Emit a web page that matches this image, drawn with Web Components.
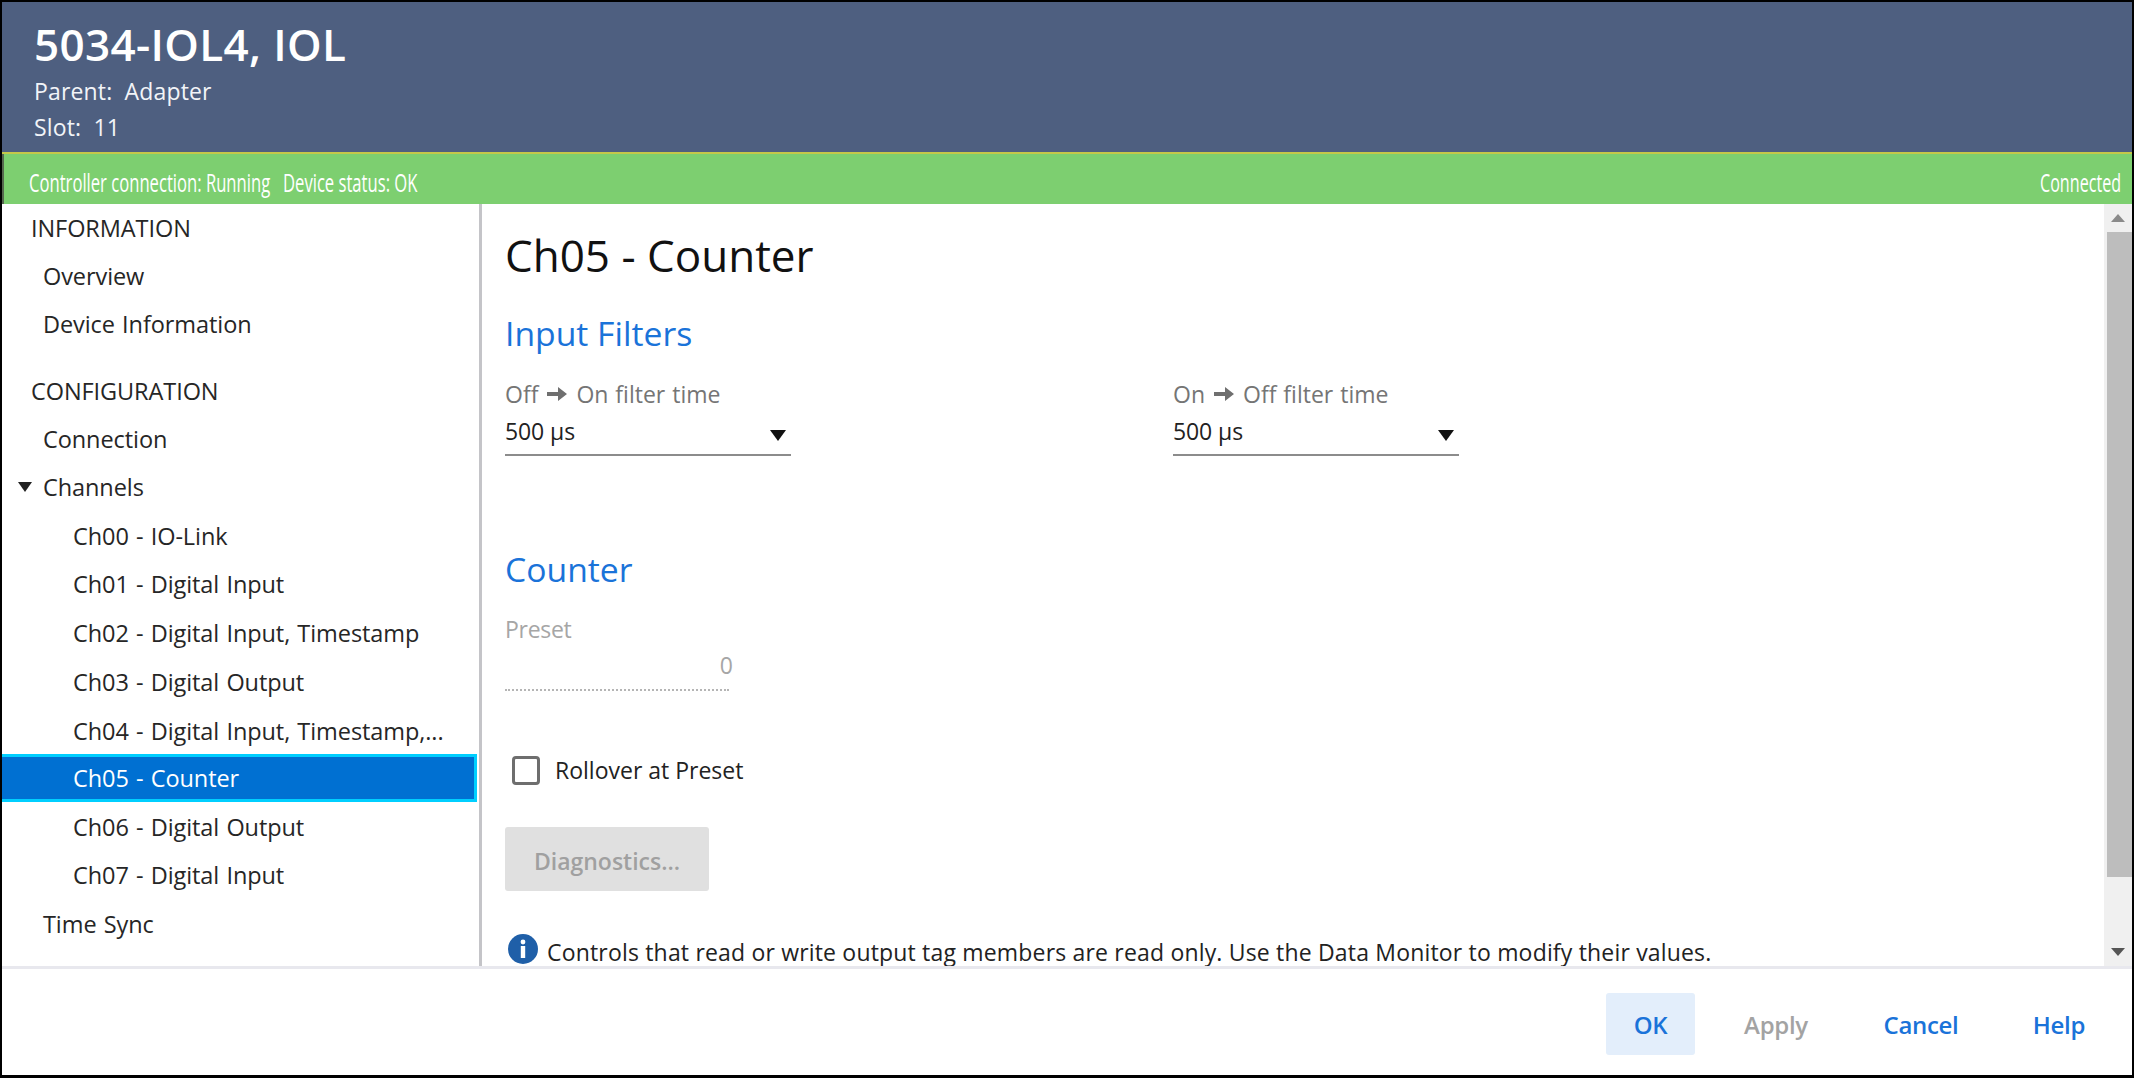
<!DOCTYPE html>
<html>
<head>
<meta charset="utf-8">
<title>5034-IOL4, IOL</title>
<style>
  html, body { margin: 0; height: 100%; background: #000; overflow: hidden; }
  body { font-family: "Open Sans", "Noto Sans", sans-serif; }
</style>
</head>
<body>
<module-dialog>
  <module-header slot="header" name="5034-IOL4, IOL" parent="Adapter" module-slot="11"></module-header>
  <status-bar slot="status" left="Controller connection: Running" middle="Device status: OK" right="Connected"></status-bar>
  <side-nav slot="nav">
    <nav-item kind="head">INFORMATION</nav-item>
    <nav-item>Overview</nav-item>
    <nav-item>Device Information</nav-item>
    <nav-item kind="gap"></nav-item>
    <nav-item kind="head">CONFIGURATION</nav-item>
    <nav-item>Connection</nav-item>
    <nav-item expanded>Channels</nav-item>
    <nav-item kind="sub">Ch00 - IO-Link</nav-item>
    <nav-item kind="sub">Ch01 - Digital Input</nav-item>
    <nav-item kind="sub">Ch02 - Digital Input, Timestamp</nav-item>
    <nav-item kind="sub">Ch03 - Digital Output</nav-item>
    <nav-item kind="sub">Ch04 - Digital Input, Timestamp,...</nav-item>
    <nav-item kind="sub" selected>Ch05 - Counter</nav-item>
    <nav-item kind="sub">Ch06 - Digital Output</nav-item>
    <nav-item kind="sub">Ch07 - Digital Input</nav-item>
    <nav-item>Time Sync</nav-item>
  </side-nav>
  <counter-page slot="main"></counter-page>
  <dialog-footer slot="footer"></dialog-footer>
</module-dialog>

<script>
class ModuleDialog extends HTMLElement {
  constructor() {
    super();
    this.attachShadow({ mode: "open" }).innerHTML = `
    <style>
      :host { display: grid; box-sizing: border-box; width: 2134px; height: 1078px; border: 2px solid #000; border-bottom-width: 3px;
        grid-template-rows: 152px 50px 762px 1fr; grid-template-columns: 480px 1fr; background: #fff; }
      .top { grid-column: 1 / 3; }
      .foot { grid-column: 1 / 3; }
      ::slotted([slot=main]) { min-width: 0; }
    </style>
    <div class="top"><slot name="header"></slot></div>
    <div class="top"><slot name="status"></slot></div>
    <slot name="nav"></slot>
    <slot name="main"></slot>
    <div class="foot"><slot name="footer"></slot></div>`;
  }
}

class ModuleHeader extends HTMLElement {
  constructor() {
    super();
    this.attachShadow({ mode: "open" }).innerHTML = `
    <style>
      :host { display: flex; flex-direction: column; box-sizing: border-box; height: 152px; background: #4e5f80; color: #fff;
        padding: 16px 0 0 32px; border-bottom: 2px solid #c4c84a; }
      h1 { margin: 0; font-size: 44px; line-height: 52px; font-weight: 600; letter-spacing: .35px; }
      p { margin: 0; font-size: 23px; line-height: 36px; color: #f2f4f8; letter-spacing: .15px; white-space: pre; }
    </style>
    <h1>${this.getAttribute("name")}</h1>
    <p style="margin-top:3px">Parent:  ${this.getAttribute("parent")}</p>
    <p>Slot:  ${this.getAttribute("module-slot")}</p>`;
  }
}

class StatusBar extends HTMLElement {
  constructor() {
    super();
    this.attachShadow({ mode: "open" }).innerHTML = `
    <style>
      :host { display: flex; box-sizing: border-box; height: 50px; background: #7dcf70; color: #fff; align-items: center;
        justify-content: space-between; padding: 6px 11px 0 25px; border-left: 2px solid #56684f; font-size: 25px; }
      span { white-space: nowrap; display: inline-block; }
      .l { display: flex; gap: 15px; }
      .a { width: 239px; } .b { width: 134px; } .c { width: 81px; }
      span > i { font-style: normal; display: inline-block; transform-origin: left center; transform: scaleX(.665); }
      .c > i { transform: scaleX(.645); }
    </style>
    <div class="l"><span class="a"><i>${this.getAttribute("left")}</i></span><span class="b"><i>${this.getAttribute("middle")}</i></span></div>
    <span class="c"><i>${this.getAttribute("right")}</i></span>`;
  }
}

class SideNav extends HTMLElement {
  constructor() {
    super();
    this.attachShadow({ mode: "open" }).innerHTML = `
    <style>
      :host { display: block; box-sizing: border-box; width: 480px; border-right: 3px solid #c4c4c8; overflow: hidden; }
    </style>
    <slot></slot>`;
  }
}

class NavItem extends HTMLElement {
  constructor() {
    super();
    const kind = this.getAttribute("kind");
    const pad = kind === "head" ? 29 : kind === "sub" ? 71 : 41;
    const twisty = this.hasAttribute("expanded")
      ? `<svg width="14" height="10" viewBox="0 0 14 10"><path d="M0 0h14L7 10z" fill="#222"/></svg>` : "";
    this.attachShadow({ mode: "open" }).innerHTML = `
    <style>
      :host { display: flex; align-items: center; box-sizing: border-box; position: relative; height: 48.2px;
        padding-left: ${pad}px; font-size: 23.5px; letter-spacing: -.08px; word-spacing: 1.2px; color: #262626; white-space: nowrap; }
      :host([kind=gap]) { height: 18px; }
      :host([kind=sub]) { height: 48.9px; }
      :host([selected]) { height: 48px; margin-top: -1.5px; background: #0070d2; color: #fff; border: 3px solid #00cfff; border-left-width: 0;
        width: 475px; padding-left: ${pad}px; }
      svg { position: absolute; left: 16px; top: 19px; }
    </style>
    ${twisty}<slot></slot>`;
  }
}

class SectionTitle extends HTMLElement {
  constructor() {
    super();
    this.attachShadow({ mode: "open" }).innerHTML = `
    <style>
      :host { display: block; font-size: 33.7px; line-height: 44px; color: #1a73d9; }
    </style>
    <slot></slot>`;
  }
}

class FieldSelect extends HTMLElement {
  constructor() {
    super();
    this.attachShadow({ mode: "open" }).innerHTML = `
    <style>
      :host { display: block; width: 286px; }
      label { display: flex; align-items: center; gap: 9px; font-size: 23px; line-height: 32px; color: #757575; word-spacing: 1px; white-space: nowrap; }
      label svg { flex: none; }
      .box { display: flex; align-items: center; justify-content: space-between; box-sizing: border-box; height: 43px; margin-top: 3px;
        border-bottom: 2px solid #8c8c8c; font-size: 23px; color: #222; padding: 0 5px 6px 0; letter-spacing: -.1px; }
      .box svg { margin-top: 9px; }
    </style>
    <label>${this.getAttribute("from")}<svg width="20" height="14" viewBox="0 0 20 14"><path d="M0 5h11V0l9 7-9 7V9H0z" fill="#6f6f6f"/></svg>${this.getAttribute("to")} filter time</label>
    <div class="box"><span>500 µs</span><svg width="16" height="11" viewBox="0 0 16 11"><path d="M0 0h16L8 11z" fill="#111"/></svg></div>`;
  }
}

class NumberField extends HTMLElement {
  constructor() {
    super();
    this.attachShadow({ mode: "open" }).innerHTML = `
    <style>
      :host { display: block; width: 224px; color: #a6a6a6; font-size: 23px; }
      .lab { line-height: 32px; letter-spacing: -.3px; }
      .val { height: 45px; line-height: 38px; text-align: right; border-bottom: 2px dotted #b5b5b5; box-sizing: border-box; margin-top: 1px; }
      .val span { margin-right: -4px; }
    </style>
    <div class="lab">${this.getAttribute("label")}</div>
    <div class="val"><span>${this.getAttribute("value")}</span></div>`;
  }
}

class CheckField extends HTMLElement {
  constructor() {
    super();
    this.attachShadow({ mode: "open" }).innerHTML = `
    <style>
      :host { display: flex; align-items: center; gap: 15px; padding-left: 7px; font-size: 23px; color: #222; height: 30px; }
      i { display: block; box-sizing: border-box; width: 28px; height: 29px; border: 3px solid #6e6e6e; border-radius: 4px; background: #fff; }
    </style>
    <i></i><slot></slot>`;
  }
}

class CounterPage extends HTMLElement {
  constructor() {
    super();
    this.attachShadow({ mode: "open" }).innerHTML = `
    <style>
      :host { display: flex; height: 762px; overflow: hidden; position: relative; }
      .body { flex: 1; min-width: 0; padding: 25px 0 0 23px; overflow: hidden; }
      h2 { margin: 0; font-weight: 400; font-size: 44px; line-height: 52px; color: #111; }
      section-title.first { margin-top: 30px; }
      .row { display: flex; gap: 382px; margin-top: 23px; }
      section-title.second { margin-top: 91px; }
      number-field { margin-top: 22px; }
      check-field { margin-top: 64px; }
      .btn { box-sizing: border-box; width: 204px; height: 64px; margin-top: 42px; padding-top: 3px; background: #e0e0e0; border-radius: 3px; color: #a0a0a0;
        font-size: 23px; font-weight: 600; display: flex; align-items: center; justify-content: center; }
      .note { display: flex; align-items: center; gap: 9px; margin-top: 43px; padding-left: 3px; font-size: 23px; color: #222; letter-spacing: .18px; white-space: nowrap; height: 30px; }
      .note span { padding-top: 5px; }
      .bar { flex: none; width: 28px; background: #f0f0f0; display: flex; flex-direction: column; align-items: flex-end; }
      .up, .down { height: 28px; width: 28px; display: flex; align-items: center; justify-content: center; }
      .thumb { width: 25px; height: 645px; background: #bdbdbd; }
      .fill { flex: 1; }
    </style>
    <div class="body">
      <h2>Ch05 - Counter</h2>
      <section-title class="first">Input Filters</section-title>
      <div class="row">
        <field-select from="Off" to="On"></field-select>
        <field-select from="On" to="Off"></field-select>
      </div>
      <section-title class="second">Counter</section-title>
      <number-field label="Preset" value="0"></number-field>
      <check-field>Rollover at Preset</check-field>
      <div class="btn">Diagnostics...</div>
      <div class="note">
        <svg width="30" height="30" viewBox="0 0 30 30"><circle cx="15" cy="15" r="15" fill="#1f5fa8"/><circle cx="15" cy="8" r="2.4" fill="#fff"/><rect x="12.8" y="12" width="4.4" height="12" fill="#fff"/></svg>
        <span>Controls that read or write output tag members are read only. Use the Data Monitor to modify their values.</span>
      </div>
    </div>
    <div class="bar">
      <div class="up"><svg width="14" height="8" viewBox="0 0 14 8"><path d="M0 8h14L7 0z" fill="#8a8a8a"/></svg></div>
      <div class="thumb"></div>
      <div class="fill"></div>
      <div class="down"><svg width="14" height="8" viewBox="0 0 14 8"><path d="M0 0h14L7 8z" fill="#555"/></svg></div>
    </div>`;
  }
}

class DialogFooter extends HTMLElement {
  constructor() {
    super();
    this.attachShadow({ mode: "open" }).innerHTML = `
    <style>
      :host { display: flex; box-sizing: border-box; height: 109px; border-top: 3px solid #e8e8ee; background: #fff; justify-content: flex-end;
        padding: 24px 0 0 0; }
      div { height: 62px; display: flex; align-items: center; justify-content: center; font-size: 24px; font-weight: 600; color: #1a73d9; border-radius: 3px; letter-spacing: -.3px; }
      .ok { width: 89px; background: #e3eefb; margin-right: 36px; }
      .apply { width: 90px; color: #a3a3a3; margin-right: 55px; }
      .cancel { width: 90px; margin-right: 63px; }
      .help { width: 60px; margin-right: 43px; }
    </style>
    <div class="ok">OK</div><div class="apply">Apply</div><div class="cancel">Cancel</div><div class="help">Help</div>`;
  }
}

customElements.define("module-dialog", ModuleDialog);
customElements.define("module-header", ModuleHeader);
customElements.define("status-bar", StatusBar);
customElements.define("side-nav", SideNav);
customElements.define("nav-item", NavItem);
customElements.define("section-title", SectionTitle);
customElements.define("field-select", FieldSelect);
customElements.define("number-field", NumberField);
customElements.define("check-field", CheckField);
customElements.define("counter-page", CounterPage);
customElements.define("dialog-footer", DialogFooter);
</script>
</body>
</html>
